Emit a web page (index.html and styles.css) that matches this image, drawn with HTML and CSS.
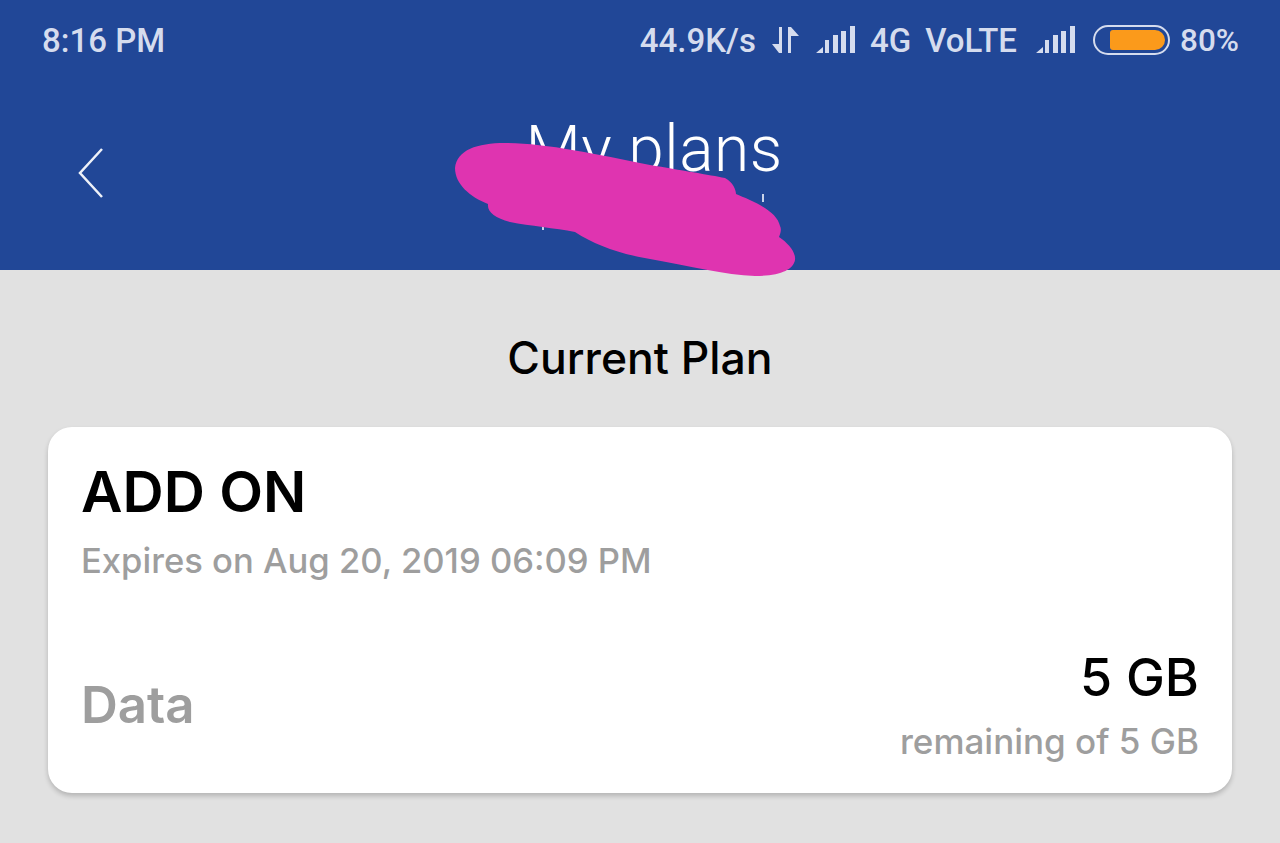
FILE: index.html
```html
<!DOCTYPE html>
<html lang="en">
<head>
  <meta charset="UTF-8">
  <meta name="viewport" content="width=device-width, initial-scale=1">
  <title>My plans</title>
  <link rel="stylesheet" href="styles.css">
</head>
<body>
  <header class="header">
    <div class="status-bar">
      <span class="clock">8:16 PM</span>
      <div class="status-right">
        <span>44.9K/s</span>
        <svg class="arrows" width="28" height="30" viewBox="0 0 28 30" fill="none" stroke="#d5dcee" stroke-width="3">
          <path d="M8.500 2v26M17.500 28V2"/>
          <path d="M7 28 0 19h7zM19 2l8 9h-8z" fill="#d5dcee" stroke="none"/>
        </svg>
        <svg class="signal" width="40" height="28" viewBox="0 0 40 28" fill="#d5dcee">
          <path d="M0 27 7 21v6zM9 14h4v13H9zM17 9h5v18h-5zM25 5h5v22h-5zM34 0h5v27h-5z"/>
        </svg>
        <span>4G</span>
        <span>VoLTE</span>
        <svg class="signal signal-sim" width="40" height="28" viewBox="0 0 40 28" fill="#d5dcee">
          <path d="M0 27 7 21v6zM9 14h4v13H9zM17 9h5v18h-5zM25 5h5v22h-5zM34 0h5v27h-5z"/>
        </svg>
        <div class="battery"><div class="battery-fill"></div></div>
        <span class="percent">80%</span>
      </div>
    </div>
    <div class="title-bar">
      <svg class="back" width="28" height="52" viewBox="0 0 28 52" fill="none" stroke="#eef1f8" stroke-width="2.500">
        <path d="M25 2 3 26l22 24"/>
      </svg>
      <h1 class="title">My plans</h1>
    </div>
    <!-- scribble drawn over the subtitle in the screenshot -->
    <svg class="scribble" width="350" height="140" viewBox="0 0 350 140">
      <path d="M308 52v8M88 80v8" stroke="#c9d3ea" stroke-width="2"/>
      <path fill="#df34b0" d="M0 26C2 8 22 1 50 1C90 1 140 12 195 23C225 28 255 33 270 36C278 40 281 48 281 52C295 58 322 68 325 84C327 88 325 92 324 95C333 101 341 110 340 118C338 128 325 134 300 134C270 133 235 124 195 117C165 112 140 103 120 90C100 86 75 84 55 80C40 76 32 70 33 62C15 55 0 42 0 26Z"/>
    </svg>
  </header>

  <main class="content">
    <h2 class="section-title">Current Plan</h2>
    <section class="card">
      <h3 class="plan-name">ADD ON</h3>
      <p class="expires">Expires on Aug 20, 2019 06:09 PM</p>
      <div class="usage">
        <span class="usage-label">Data</span>
        <div class="usage-values">
          <span class="amount">5 GB</span>
          <span class="remaining">remaining of 5 GB</span>
        </div>
      </div>
    </section>
  </main>
</body>
</html>
```

FILE: styles.css
```css
/* Global Reset */
* { box-sizing: border-box; }
html, body { margin: 0; padding: 0; overflow: hidden; }

body {
  background: #e1e1e1;
  color: #000;
  font-family: Inter, "Liberation Sans", sans-serif;
  height: 100vh;
}

/* Header */
.header {
  position: relative;
  height: 270px;
  background: #214797;
  color: #fff;
}

.status-bar {
  display: flex;
  align-items: center;
  justify-content: space-between;
  height: 80px;
  padding: 0 41px 0 42px;
  color: #d5dcee;
  font-family: Roboto, sans-serif;
  font-size: 33px;
  font-weight: 500;
}

.status-right { display: flex; align-items: center; gap: 14px; }
.arrows { margin-left: 2px; }
.signal { margin-left: 2px; }
.signal-sim { margin-left: 5px; }
.percent { font-size: 31.500px; margin-left: -4px; }

.battery {
  width: 77px;
  height: 30px;
  margin-left: 3px;
  padding: 3px 3px 3px 15px;
  border: 2px solid #d5dcee;
  border-radius: 15px;
}
.battery-fill {
  height: 100%;
  background: #fb9a1b;
  border-radius: 3px 10px 10px 3px;
}

.title-bar {
  position: relative;
  display: flex;
  justify-content: center;
  padding: 35px 0 0 28px;
}
.back { position: absolute; left: 77px; top: 67px; }
.title {
  margin: 0;
  font-family: Roboto, sans-serif;
  font-size: 64px;
  font-weight: 300;
  letter-spacing: 0.5px;
  line-height: 70px;
}

.scribble { position: absolute; left: 455px; top: 142px; }

/* Content */
.content { padding: 0 48px; }

.section-title {
  margin: 0;
  padding: 63px 0 44px;
  font-size: 44.500px;
  font-weight: 500;
  line-height: 50px;
  text-align: center;
}

.card {
  height: 366px;
  padding: 34px 33px 0;
  background: #fff;
  border-radius: 24px;
  box-shadow: 0 3px 5px rgba(0,0,0,0.2);
}

.plan-name {
  margin: 0;
  font-size: 57px;
  font-weight: 600;
  line-height: 62px;
}

.expires {
  margin: 15px 0 0;
  color: #9e9e9e;
  font-size: 34.600px;
  font-weight: 500;
  line-height: 44px;
}

.usage {
  display: flex;
  align-items: center;
  justify-content: space-between;
  margin-top: 69px;
}
.usage-label { padding-bottom: 5px; color: #9e9e9e; font-size: 51px; font-weight: 600; }
.usage-values { display: flex; flex-direction: column; align-items: flex-end; gap: 14px; }
.amount { font-size: 52px; font-weight: 500; line-height: 54px; }
.remaining { color: #9e9e9e; font-size: 35px; font-weight: 500; line-height: 44px; }
```
